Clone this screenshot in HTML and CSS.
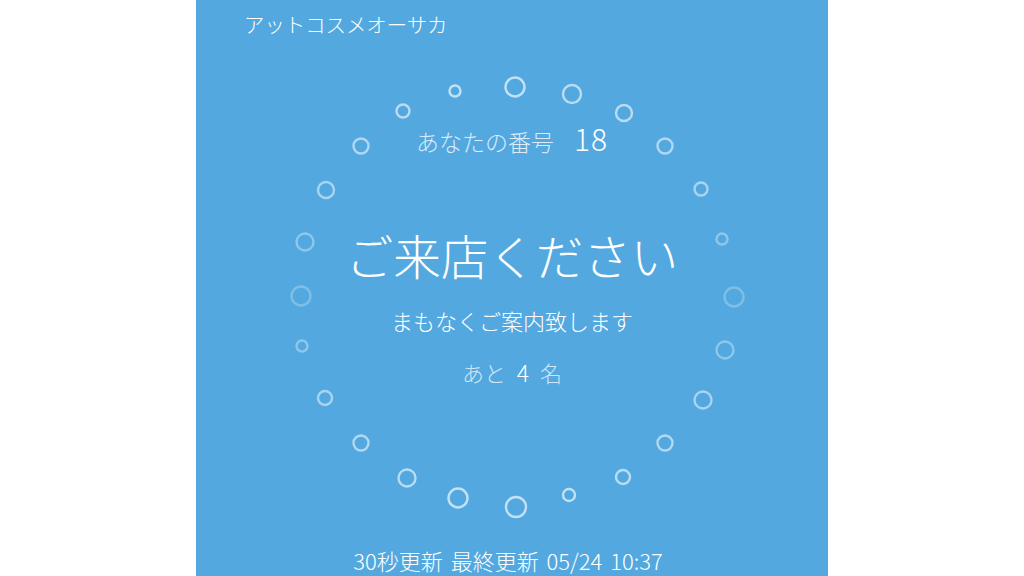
FILE: index.html
```html
<!DOCTYPE html>
<html lang="ja">
<head>
<meta charset="utf-8">
<title>アットコスメオーサカ</title>
<link rel="stylesheet" href="styles.css">
</head>
<body>
<div class="panel">
  <svg class="ring" viewBox="0 0 632 576" aria-hidden="true">
    <g fill="none" stroke="#ffffff" stroke-width="2.4">
      <circle cx="319" cy="87" r="9.5" stroke-opacity="0.65"/>
      <circle cx="259" cy="91" r="5.5" stroke-opacity="0.65"/>
      <circle cx="376" cy="94" r="9" stroke-opacity="0.6"/>
      <circle cx="207" cy="111" r="6.5" stroke-opacity="0.6"/>
      <circle cx="428" cy="113" r="8" stroke-opacity="0.6"/>
      <circle cx="165" cy="146" r="7.5" stroke-opacity="0.55"/>
      <circle cx="469" cy="146" r="7.5" stroke-opacity="0.55"/>
      <circle cx="130" cy="190" r="8" stroke-opacity="0.5"/>
      <circle cx="505" cy="189" r="6.5" stroke-opacity="0.5"/>
      <circle cx="109" cy="242" r="8.5" stroke-opacity="0.35"/>
      <circle cx="526" cy="239" r="5.5" stroke-opacity="0.35"/>
      <circle cx="105" cy="296" r="9.5" stroke-opacity="0.25"/>
      <circle cx="538" cy="297" r="9.5" stroke-opacity="0.25"/>
      <circle cx="106" cy="346" r="5.5" stroke-opacity="0.35"/>
      <circle cx="529" cy="350" r="8.5" stroke-opacity="0.35"/>
      <circle cx="129" cy="398" r="7" stroke-opacity="0.5"/>
      <circle cx="507" cy="400" r="8.5" stroke-opacity="0.5"/>
      <circle cx="165" cy="443" r="7.5" stroke-opacity="0.55"/>
      <circle cx="469" cy="443" r="7.5" stroke-opacity="0.55"/>
      <circle cx="211" cy="478" r="8.5" stroke-opacity="0.6"/>
      <circle cx="427" cy="477" r="7" stroke-opacity="0.6"/>
      <circle cx="262" cy="498" r="9.5" stroke-opacity="0.65"/>
      <circle cx="373" cy="495" r="6" stroke-opacity="0.65"/>
      <circle cx="320" cy="507" r="10" stroke-opacity="0.65"/>
    </g>
  </svg>
  <header class="shop">アットコスメオーサカ</header>
  <main class="status">
    <div class="number-row"><span class="number-label">あなたの番号</span><span class="number">18</span></div>
    <h1 class="headline">ご来店ください</h1>
    <p class="sub">まもなくご案内致します</p>
    <p class="remain">あと <span class="count">4</span> 名</p>
  </main>
  <footer class="updated">30秒更新 最終更新 05/24 10:37</footer>
</div>
</body>
</html>
```

FILE: styles.css
```css
html, body {
  margin: 0;
  padding: 0;
  background: #ffffff;
  height: 100%;
}
body {
  display: flex;
  justify-content: center;
  font-family: "Noto Sans CJK JP", "Noto Sans", sans-serif;
  color: #ffffff;
}
.panel {
  position: relative;
  width: 632px;
  height: 576px;
  background: #53a9df;
  display: flex;
  flex-direction: column;
  overflow: hidden;
}
.ring {
  position: absolute;
  left: 0;
  top: 0;
  width: 632px;
  height: 576px;
}
.shop {
  position: relative;
  padding: 10px 0 0 48px;
  font-size: 20.4px;
  line-height: 28px;
  font-weight: 300;
}
.status {
  position: relative;
  display: flex;
  flex-direction: column;
  align-items: center;
  margin-top: 80px;
}
.number-row {
  display: flex;
  align-items: baseline;
  gap: 20px;
  line-height: 40px;
}
.number-label {
  font-size: 23px;
  font-weight: 300;
  color: rgba(255, 255, 255, 0.78);
}
.number {
  font-size: 30px;
  letter-spacing: 1px;
  font-weight: 300;
}
.headline {
  margin: 64px 0 0;
  font-size: 47.5px;
  line-height: 60px;
  font-weight: 300;
}
.sub {
  margin: 20px 0 0;
  font-size: 22px;
  line-height: 30px;
  font-weight: 300;
}
.remain {
  margin: 22px 0 0;
  font-size: 22px;
  line-height: 30px;
  font-weight: 300;
  word-spacing: 6px;
  color: rgba(255, 255, 255, 0.72);
}
.count {
  color: #ffffff;
  font-size: 23px;
}
.updated {
  position: relative;
  margin-top: auto;
  padding: 0 8px 2px 0;
  text-align: center;
  font-size: 22px;
  line-height: 28px;
  word-spacing: 3px;
  font-weight: 300;
}
```
